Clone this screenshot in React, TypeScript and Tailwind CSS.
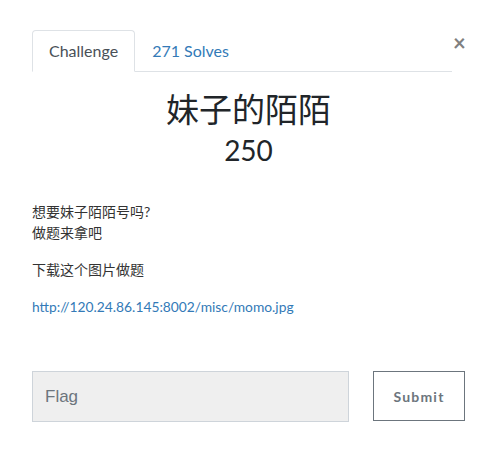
export default function App() {
  const cjk = "font-['Lato','Noto_Sans_CJK_SC',sans-serif]";

  return (
    <div className={`w-[497px] h-[463px] bg-white pl-[32px] pt-[30px] text-[#212529] ${cjk}`}>
      {/* Tabs + close */}
      <div className="flex items-start">
        <ul className="flex w-[420px] border-b border-[#dee2e6]">
          <li className="-mb-px">
            <span className="block px-4 py-2 text-[16px] leading-6 text-[#495057] bg-white border border-[#dee2e6] border-b-white rounded-t">
              Challenge
            </span>
          </li>
          <li className="-mb-px">
            <span className="block px-4 py-2 text-[16px] leading-6 text-[#337ab7] border border-transparent">
              271 Solves
            </span>
          </li>
        </ul>
        <button className="ml-[1px] mt-[1px] w-[12px] text-[22px] leading-[24px] font-bold text-[#808080] text-center">
          ×
        </button>
      </div>

      {/* Title */}
      <div className="w-[433px] text-center">
        <h3 className="mt-[18px] text-[33px] leading-[38px] font-normal">妹子的陌陌</h3>
        <h4 className="mt-[5px] text-[28px] leading-[34px] font-normal">250</h4>
      </div>

      {/* Description */}
      <div className="mt-[34px] text-[14px] leading-[21px] text-[#333]">
        <p>
          想要妹子陌陌号吗?
          <br />
          做题来拿吧
        </p>
        <p className="mt-4">下载这个图片做题</p>
        <p className="mt-4 text-[13.8px]">
          <a className="text-[#337ab7]">http://120.24.86.145:8002/misc/momo.jpg</a>
        </p>
      </div>

      {/* Flag form */}
      <div className="mt-[54px] flex items-start">
        <input
          placeholder="Flag"
          className="w-[317px] h-[51px] px-[12px] bg-[#efefef] border border-[#ced4da] text-[17px] font-['Liberation_Sans',sans-serif] placeholder:text-[#6c757d] outline-none"
        />
        <button className="ml-[24px] w-[92px] h-[50px] border border-[#6c757d] bg-white text-[14px] font-bold tracking-[1.2px] text-[#6c757d]">
          Submit
        </button>
      </div>
    </div>
  );
}
